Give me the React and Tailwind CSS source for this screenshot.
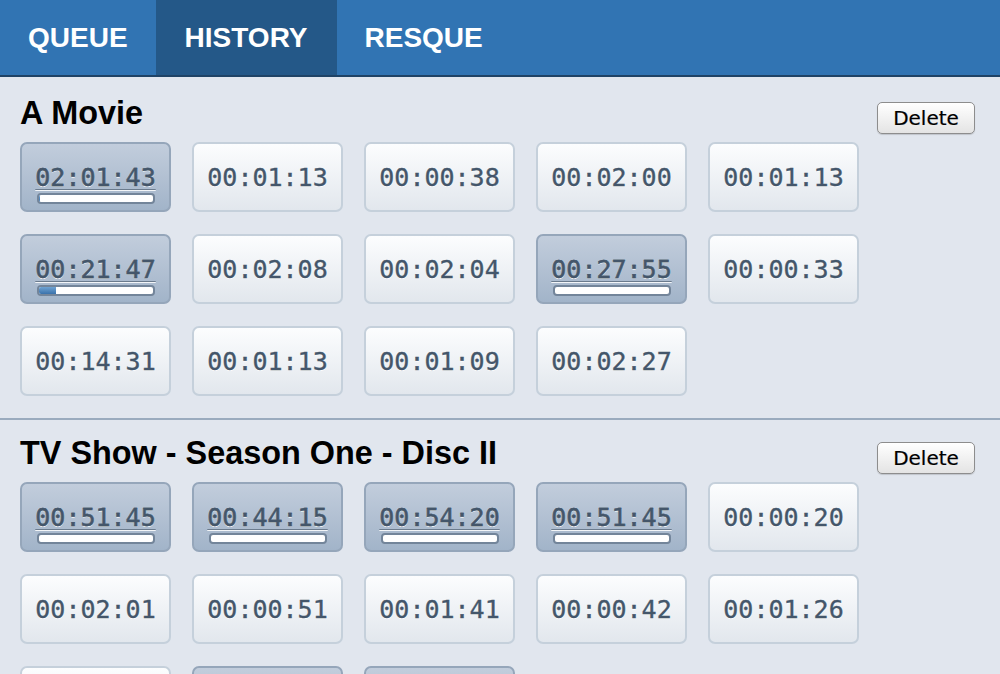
import React from "react";

const sections = [
  {
    title: "A Movie",
    tiles: [
      { t: "02:01:43", p: 1 },
      { t: "00:01:13" },
      { t: "00:00:38" },
      { t: "00:02:00" },
      { t: "00:01:13" },
      { t: "00:21:47", p: 15 },
      { t: "00:02:08" },
      { t: "00:02:04" },
      { t: "00:27:55", p: 0 },
      { t: "00:00:33" },
      { t: "00:14:31" },
      { t: "00:01:13" },
      { t: "00:01:09" },
      { t: "00:02:27" },
    ],
  },
  {
    title: "TV Show - Season One - Disc II",
    tiles: [
      { t: "00:51:45", p: 0 },
      { t: "00:44:15", p: 0 },
      { t: "00:54:20", p: 0 },
      { t: "00:51:45", p: 0 },
      { t: "00:00:20" },
      { t: "00:02:01" },
      { t: "00:00:51" },
      { t: "00:01:41" },
      { t: "00:00:42" },
      { t: "00:01:26" },
      { t: "" },
      { t: "", p: 0 },
      { t: "", p: 0 },
    ],
  },
];

function Tile({ t, p }) {
  const dark = p !== undefined;
  return (
    <div
      className={
        "w-[151px] h-[70px] rounded-[7px] border-2 flex flex-col items-center pt-[19px] " +
        (dark
          ? "border-[#95a6ba] bg-gradient-to-b from-[#c2cddc] to-[#a2b4c9]"
          : "border-[#c5d0db] bg-gradient-to-b from-[#fcfdfe] to-[#e2e7ed]")
      }
    >
      <span
        className={
          "h-[29px] text-[25px] leading-[29px] text-[#44566a] [text-shadow:0_1px_0_rgba(255,255,255,0.85)] " +
          (dark ? "underline decoration-1 underline-offset-[3px] decoration-[#6b7b8d]" : "")
        }
        style={{ fontFamily: '"DejaVu Sans Mono", monospace', WebkitTextStroke: "0.35px #44566a" }}
      >
        {t}
      </span>
      {dark && (
        <div className="mt-[1px] w-[118px] h-[11px] rounded-[4px] border-2 border-[#73859a] bg-white overflow-hidden">
          <div
            className="h-full bg-gradient-to-b from-[#6fa3d3] to-[#3a72ab]"
            style={{ width: `${p}%` }}
          />
        </div>
      )}
    </div>
  );
}

function Section({ title, tiles, first }) {
  return (
    <div
      className={
        "pl-[20px] pr-[25px] " +
        (first ? "pt-[18px] pb-[22px] border-b-2 border-[#9aabbe]" : "pt-[15px] pb-[22px]")
      }
    >
      <div className="flex justify-between items-start h-[36px] mb-[11px]">
        <h2
          className="text-[32.4px] leading-[36px] font-bold text-black"
          style={{ fontFamily: '"Liberation Sans", Arial, sans-serif' }}
        >
          {title}
        </h2>
        <button
          className="mt-[7px] w-[98px] h-[32px] rounded-[5px] border border-[#8d8d8d] bg-gradient-to-b from-white to-[#e4e4e4] shadow-[0_1px_1px_rgba(0,0,0,0.15)] text-[20px] leading-none text-black"
          style={{ fontFamily: '"DejaVu Sans", sans-serif', WebkitTextStroke: "0.2px #000" }}
        >
          Delete
        </button>
      </div>
      <div className="grid grid-cols-[repeat(5,151px)] gap-x-[21px] gap-y-[22px]">
        {tiles.map((tile, i) => (
          <Tile key={i} {...tile} />
        ))}
      </div>
    </div>
  );
}

export default function App() {
  return (
    <div className="w-[1000px] h-[674px] overflow-hidden bg-[#e1e6ee]">
      <nav
        className="flex h-[77px] bg-[#3174b3] border-b-2 border-[#1f4366] text-[28px] font-bold text-white"
        style={{ fontFamily: '"Liberation Sans", Arial, sans-serif' }}
      >
        <div className="flex items-center pt-[1px] px-[28px]">QUEUE</div>
        <div className="flex items-center pt-[1px] px-[29px] bg-[#245888]">HISTORY</div>
        <div className="flex items-center pt-[1px] px-[28px]">RESQUE</div>
      </nav>
      {sections.map((s, i) => (
        <Section key={i} {...s} first={i === 0} />
      ))}
    </div>
  );
}
